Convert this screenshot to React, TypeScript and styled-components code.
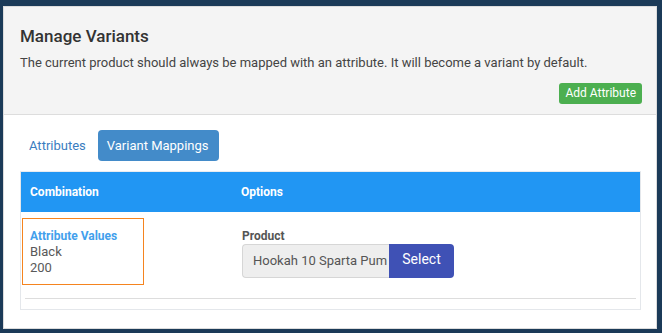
import React from 'react'
import styled, { createGlobalStyle } from 'styled-components'

const GlobalStyle = createGlobalStyle`
  html, body {
    margin: 0;
    padding: 0;
    background: #1b3a58;
  }
  * {
    box-sizing: border-box;
  }
  body {
    font-family: Roboto, "Liberation Sans", Arial, sans-serif;
  }
`

const Frame = styled.div`
  padding: 6px 5px 4px 3px;
  height: 333px;
`

const Card = styled.div`
  height: 323px;
  background: #fff;
  border: 1px solid #dcdcdc;
  display: flex;
  flex-direction: column;
`

const Header = styled.div`
  background: #f4f4f4;
  border-bottom: 1px solid #dddddd;
  padding: 19px 14px 10px 16px;
  display: flex;
  flex-direction: column;
`

const Title = styled.h3`
  margin: 0;
  font-size: 17px;
  line-height: 20px;
  font-weight: 500;
  color: #333;
`

const Description = styled.p`
  margin: 8px 0 0;
  font-size: 13px;
  line-height: 18px;
  color: #444;
`

const HeaderActions = styled.div`
  display: flex;
  justify-content: flex-end;
  margin-top: 11px;
`

const GreenButton = styled.button`
  height: 21px;
  padding: 0 6px;
  border: none;
  border-radius: 3px;
  background: #4caf50;
  color: #fff;
  font-family: inherit;
  font-size: 12px;
  line-height: 21px;
`

const Body = styled.div`
  padding: 15px 15px 0 16px;
  display: flex;
  flex-direction: column;
`

const Tabs = styled.div`
  display: flex;
  gap: 2px;
  height: 31px;
`

const Tab = styled.div<{ active?: boolean }>`
  display: flex;
  align-items: center;
  padding: 0 10px 0 9px;
  border-radius: 4px;
  font-size: 13px;
  color: ${({ active }) => (active ? '#fff' : '#3a7dbf')};
  background: ${({ active }) => (active ? '#438bc9' : 'transparent')};
`

const Table = styled.div`
  margin-top: 10px;
  border: 1px solid #e4e7eb;
  border-top-color: #e8ecf0;
`

const HeadRow = styled.div`
  display: flex;
  height: 40px;
  background: #2196f3;
  align-items: center;
`

const HeadCell = styled.div<{ w?: number }>`
  ${({ w }) => (w ? `width: ${w}px;` : 'flex: 1;')}
  padding-left: 9px;
  font-size: 12px;
  font-weight: 700;
  color: #fff;
`

const Row = styled.div`
  display: flex;
  padding: 6px 0 13px;
`

const ComboCell = styled.div`
  width: 211px;
  padding-left: 1px;
`

const ValuesBox = styled.div`
  width: 122px;
  border: 1px solid #f5841f;
  padding: 9px 7px 8px;
  font-size: 13px;
  line-height: 16px;
  color: #595959;
`

const ValuesLabel = styled.div`
  font-size: 12px;
  font-weight: 700;
  color: #42a0ec;
`

const OptionsCell = styled.div`
  flex: 1;
  padding: 10px 0 0 10px;
`

const FieldLabel = styled.div`
  font-size: 12px;
  font-weight: 700;
  line-height: 16px;
  color: #555;
`

const InputGroup = styled.div`
  display: flex;
  height: 34px;
`

const Input = styled.div`
  width: 147px;
  border: 1px solid #d6d6d6;
  border-right: none;
  border-radius: 4px 0 0 4px;
  background: #eeeeee;
  padding: 0 2px 0 10px;
  font-size: 13px;
  line-height: 32px;
  color: #555;
  white-space: nowrap;
  overflow: hidden;
`

const SelectButton = styled.button`
  width: 65px;
  border: none;
  border-radius: 0 4px 4px 0;
  background: #3f51b5;
  color: #fff;
  font-family: inherit;
  font-size: 14px;
  padding: 0 0 4px;
`

const Rule = styled.hr`
  margin: 0 4px 10px;
  border: none;
  border-top: 1px solid #dddddd;
`

export default function App() {
  return (
    <>
      <GlobalStyle />
      <Frame>
        <Card>
          <Header>
            <Title>Manage Variants</Title>
            <Description>
              The current product should always be mapped with an attribute. It will become a variant by default.
            </Description>
            <HeaderActions>
              <GreenButton>Add Attribute</GreenButton>
            </HeaderActions>
          </Header>
          <Body>
            <Tabs>
              <Tab>Attributes</Tab>
              <Tab active>Variant Mappings</Tab>
            </Tabs>
            <Table>
              <HeadRow>
                <HeadCell w={211}>Combination</HeadCell>
                <HeadCell>Options</HeadCell>
              </HeadRow>
              <Row>
                <ComboCell>
                  <ValuesBox>
                    <ValuesLabel>Attribute Values</ValuesLabel>
                    <div>Black</div>
                    <div>200</div>
                  </ValuesBox>
                </ComboCell>
                <OptionsCell>
                  <FieldLabel>Product</FieldLabel>
                  <InputGroup>
                    <Input>Hookah 10 Sparta Pum</Input>
                    <SelectButton>Select</SelectButton>
                  </InputGroup>
                </OptionsCell>
              </Row>
              <Rule />
            </Table>
          </Body>
        </Card>
      </Frame>
    </>
  )
}
